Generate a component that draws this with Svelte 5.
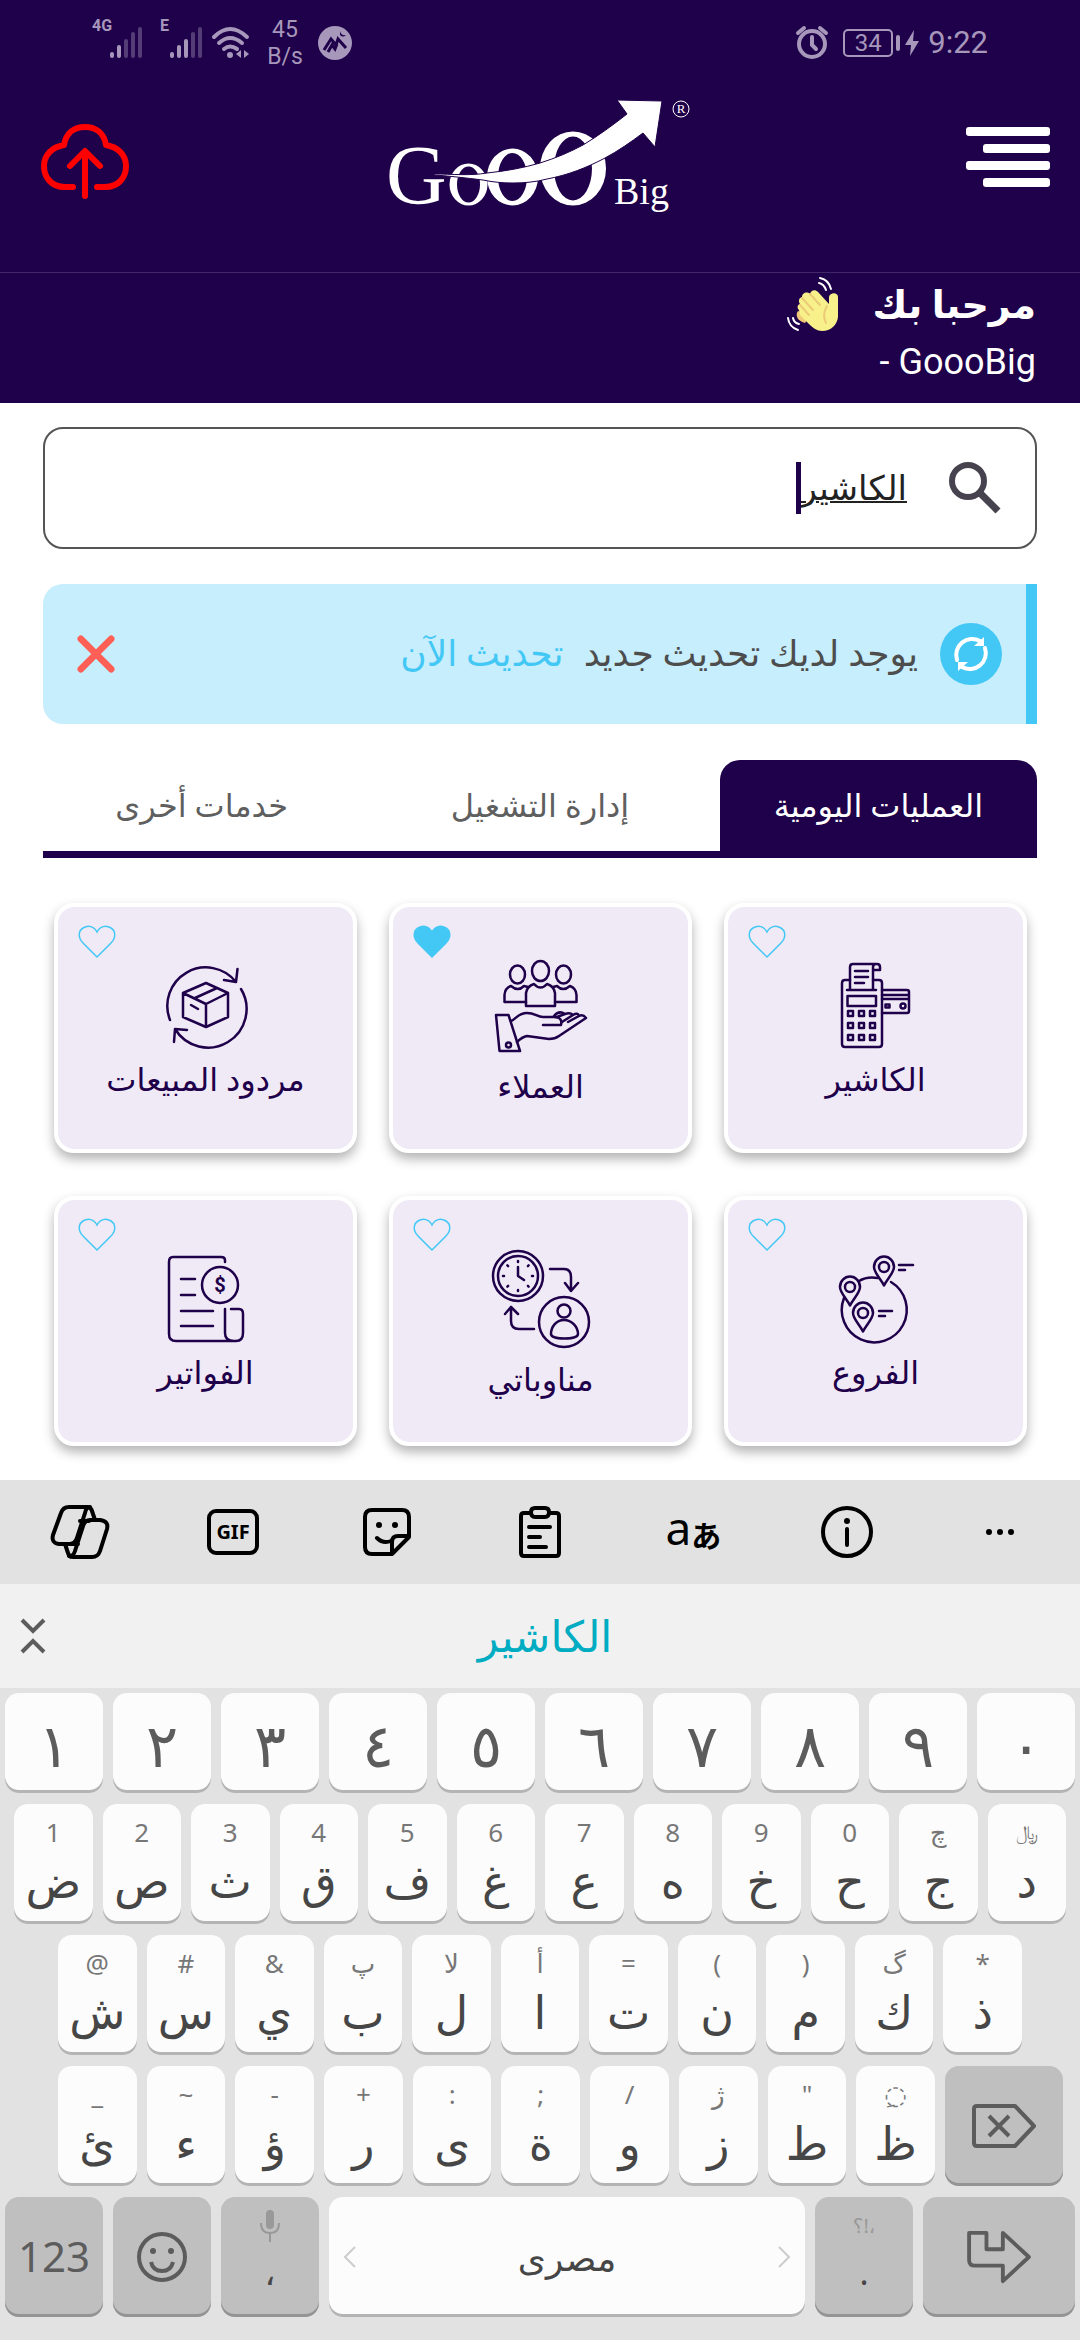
<script>
  let query = $state('الكاشير');
  let activeTab = $state(0);

  const tabs = ['العمليات اليومية', 'إدارة التشغيل', 'خدمات أخرى'];

  const services = [
    { icon: 'cashier', label: 'الكاشير' },
    { icon: 'customers', label: 'العملاء', tall: true, liked: true },
    { icon: 'returns', label: 'مردود المبيعات' },
    { icon: 'branches', label: 'الفروع' },
    { icon: 'shifts', label: 'مناوباتي', tall: true },
    { icon: 'invoices', label: 'الفواتير' }
  ];

  const viewBoxes = {
    cashier: '-14 -6 98 91',
    customers: '-3 -3 98 98',
    returns: '-9 -8 98 91',
    branches: '-12 -6 98 91',
    shifts: '0 0 98 98',
    invoices: '-11 -6 98 91'
  };

  const digits = ['١', '٢', '٣', '٤', '٥', '٦', '٧', '٨', '٩', '٠'];
  const rowA = [
    ['1', 'ض'], ['2', 'ص'], ['3', 'ث'], ['4', 'ق'], ['5', 'ف'], ['6', 'غ'],
    ['7', 'ع'], ['8', 'ه'], ['9', 'خ'], ['0', 'ح'], ['چ', 'ج'], ['﷼', 'د']
  ];
  const rowB = [
    ['@', 'ش'], ['#', 'س'], ['&', 'ي'], ['پ', 'ب'], ['لا', 'ل'], ['أ', 'ا'],
    ['=', 'ت'], ['(', 'ن'], [')', 'م'], ['گ', 'ك'], ['*', 'ذ']
  ];
  const rowC = [
    ['_', 'ئ'], ['~', 'ء'], ['-', 'ؤ'], ['+', 'ر'], [':', 'ى'], [';', 'ة'],
    ['/', 'و'], ['ژ', 'ز'], ['"', 'ط'], ['◌ِ', 'ظ']
  ];
  const keypad = [9.5, 20.5, 31.5];
  const keypadRows = [50.5, 62.5, 74.5];
  const ticks = [0, 45, 90, 135, 180, 225, 270, 315];
</script>

{#snippet signal(strong)}
  <svg class="signal" width="34" height="32" viewBox="0 0 34 32" aria-hidden="true">
    {#each [6, 13, 19, 26, 31] as h, i}
      <rect x={i * 7} y={31 - h} width="4" height={h} rx="2" opacity={i < strong ? 1 : 0.4} />
    {/each}
  </svg>
{/snippet}

{#snippet pin(x, y)}
  <path d="M{x} {y + 18.5}C{x - 3} {y + 12} {x - 10} {y + 6} {x - 10} {y}a10 10.500 0 0 1 20 0C{x + 10} {y + 6} {x + 3} {y + 12} {x} {y + 18.5}z" />
  <circle cx={x} cy={y} r="5" />
{/snippet}

{#snippet letterKey(hint, letter)}
  <button class="key letter" type="button">
    <span class="hint" class:small={hint === '﷼'}>{hint}</span>
    <span class="main">{letter}</span>
  </button>
{/snippet}

<div class="screen">
  <header class="top">
    <div class="status">
      <div class="group">
        <span class="net">4G</span>
        {@render signal(2)}
        <span class="net edge">E</span>
        {@render signal(3)}
        <svg class="wifi" width="40" height="32" viewBox="0 0 40 32" aria-hidden="true">
          <g fill="none" stroke="currentColor" stroke-width="4" stroke-linecap="round">
            <path d="M2 10Q18-6 35 10" /><path d="M7 16Q18 6 30 16" /><path d="M12 22Q18 17 25 22" />
          </g>
          <circle cx="18" cy="28" r="3" />
          <path d="M29 23v8l-5-4zM32 23v8l5-4z" />
        </svg>
        <span class="speed">45<br />B/s</span>
        <svg width="34" height="34" viewBox="0 0 34 34" aria-hidden="true">
          <circle cx="17" cy="17" r="17" />
          <g class="cut">
            <path d="M6 24L13 13L18 19L20 13L28 22M10 26L14 19L17 23L19 18" />
            <path d="M22 5Q23 10 28 9Q25 12 22 9z" />
          </g>
        </svg>
      </div>
      <div class="group">
        <svg width="34" height="34" viewBox="0 0 34 34" aria-hidden="true">
          <g fill="none" stroke="currentColor" stroke-width="4" stroke-linecap="round">
            <circle cx="17" cy="18" r="13" /><path d="M17 11v8l4 4M3 7l6-5M31 7l-6-5" />
          </g>
        </svg>
        <span class="battery">34</span>
        <svg width="24" height="30" viewBox="0 0 24 30" aria-hidden="true">
          <rect x="0" y="7" width="4" height="16" rx="2" />
          <path d="M18 2L9 17h6l-1 11 9-15h-6z" />
        </svg>
        <span class="clock">9:22</span>
      </div>
    </div>

    <div class="bar" dir="rtl">
      <button class="plain menu" type="button" aria-label="القائمة">
        <svg width="84" height="60" viewBox="0 0 84 60">
          <g fill="#fff">
            <rect x="0" y="0" width="84" height="9" rx="3" /><rect x="17" y="17" width="67" height="9" rx="3" />
            <rect x="0" y="34" width="84" height="9" rx="3" /><rect x="17" y="51" width="67" height="9" rx="3" />
          </g>
        </svg>
      </button>
      <svg class="logo" width="304" height="118" viewBox="388 98 304 118" role="img" aria-label="GoooBig">
        <g fill="#fff">
          <text class="serif" x="386" y="204" font-size="84">G</text>
          <path fill-rule="evenodd" d="M449.500 184.500a19 21 0 1 0 38 0a19 21 0 1 0-38 0zM457 184.500a11.500 18 0 1 1 23 0a11.500 18 0 1 1-23 0z" />
          <path fill-rule="evenodd" d="M487 177a25.500 28.500 0 1 0 51 0a25.500 28.500 0 1 0-51 0zM498 177a14.500 24 0 1 1 29 0a14.500 24 0 1 1-29 0z" />
          <path fill-rule="evenodd" d="M540 168.500a33 37 0 1 0 66 0a33 37 0 1 0-66 0zM554 168.500a19 32 0 1 1 38 0a19 32 0 1 1-38 0z" />
          <path class="swoosh" d="M434 174C452 174 470 176 487 173C506 171 523 168 540 163C556 158 570 152 583 145C598 136 613 125 627 114L617 100L662 101L655 147L643 133C631 142 618 151 605 158C586 168 568 175 547 179C536 182 524 183 513 183C502 183 492 182 483 180C466 178 450 176 434 175z" />
          <text class="serif" x="614" y="204" font-size="38">Big</text>
          <text class="serif" x="681" y="113" font-size="13" text-anchor="middle">R</text>
        </g>
        <circle cx="681" cy="109" r="8" fill="none" stroke="#fff" stroke-width="1" />
      </svg>
      <button class="plain upload" type="button" aria-label="رفع">
        <svg width="88" height="76" viewBox="0 0 88 76">
          <g fill="none" stroke="#f00" stroke-width="6" stroke-linecap="round" stroke-linejoin="round">
            <path d="M32 63H24C10 63 3 53 3 42C3 31 11 23 23 21C25 9 33 3 44 3C55 3 63 9 65 21C77 23 85 31 85 42C85 53 78 63 64 63H56" />
            <path d="M44 72V28M29 42L44 27L59 42" />
          </g>
        </svg>
      </button>
    </div>
  </header>

  <section class="greeting" dir="rtl">
    <h1>
      مرحبا بك
      <svg width="54" height="56" viewBox="0 0 54 56" aria-hidden="true">
        <path fill="#f0c878" d="M11 34C8 38 10 44 18 46L24 38z" />
        <path fill="#f8f08a" d="M13 38L12 33C10 31 10 28 13 27C11 24 12 21 15 20C15 16 20 14 23 17C24 13 28 12 31 15L42 27V20C43 15 51 15 51 20V40C50 48 44 54 35 54C30 54 26 51 22 47z" />
        <path fill="none" stroke="#eccb78" stroke-width="2" stroke-linecap="round" d="M23 17l10 11M15 21l11 12M13 28l9 10M39 46C36 40 37 34 40 29" />
        <path fill="none" stroke="#fff" stroke-width="2" stroke-linecap="round" d="M32 6q5 1 7 7M33 1q9 2 11 11M6 41q1 5 6 6M1 41q1 9 10 12" />
      </svg>
    </h1>
    <p>GoooBig -</p>
  </section>

  <main dir="rtl">
    <label class="search">
      <svg width="52" height="52" viewBox="0 0 52 52" aria-hidden="true">
        <circle cx="19" cy="19" r="16" fill="none" stroke="#46434e" stroke-width="6" />
        <path d="M31 31L49 49" fill="none" stroke="#46434e" stroke-width="7" />
      </svg>
      <input type="text" bind:value={query} aria-label="بحث" />
      <span class="caret"></span>
    </label>

    <div class="notice">
      <svg width="62" height="62" viewBox="0 0 62 62" aria-hidden="true">
        <circle cx="31" cy="31" r="31" fill="#43c8f5" />
        <g fill="none" stroke="#fff" stroke-width="4" stroke-linecap="round">
          <path d="M17 37A16 16 0 0 1 40 18M45 25A16 16 0 0 1 22 44" />
        </g>
        <path fill="#fff" d="M44 14v9h-10zM18 48v-9h10z" />
      </svg>
      <span>يوجد لديك تحديث جديد</span>
      <a href="#update">تحديث الآن</a>
      <button class="plain close" type="button" aria-label="إغلاق">
        <svg width="38" height="38" viewBox="0 0 40 40">
          <path d="M4 4L36 36M36 4L4 36" fill="none" stroke="#ff5f55" stroke-width="7" stroke-linecap="round" />
        </svg>
      </button>
    </div>

    <nav class="tabs">
      {#each tabs as tab, i}
        <button type="button" class:active={activeTab === i} onclick={() => (activeTab = i)}>{tab}</button>
      {/each}
    </nav>

    <div class="grid">
      {#each services as s}
        <article class="card">
          <button class="plain heart" type="button" aria-label="المفضلة" aria-pressed={!!s.liked}>
            <svg width="38" height="34" viewBox="0 0 38 34">
              <path d="M19 32L5 18C0 13 0 6 5 3C10 0 16 1 19 7C22 1 28 0 33 3C38 6 38 13 33 18z" fill={s.liked ? '#43c8f5' : 'none'} stroke="#43c8f5" stroke-width="1.500" />
            </svg>
          </button>
          <svg class="art" width="98" height={s.tall ? 98 : 91} viewBox={viewBoxes[s.icon]} aria-hidden="true">
            {#if s.icon === 'cashier'}
              <path d="M9 17H4Q1 17 1 20V81Q1 84 4 84H38Q41 84 41 81V20Q41 17 38 17H32" />
              <path d="M9 27V4Q9 1 12 1H36Q39 1 39 4V7H32V27M32 7V4Q32 1 35 1M6 27H35" />
              <path d="M14 8H27M14 14H27M14 20H23" />
              <rect x="6.500" y="33" width="28.500" height="10" />
              {#each keypadRows as y}{#each keypad as x}<rect x={x - 2.5} y={y - 2.5} width="5" height="5" />{/each}{/each}
              <path d="M41 27H66Q68 27 68 29V48Q68 50 66 50H41M41 32H68M41 36H68" />
              <rect x="44.500" y="41.500" width="4" height="3" /><circle cx="62" cy="43" r="2.500" />
            {:else if s.icon === 'customers'}
              <ellipse cx="45.500" cy="11" rx="8.500" ry="10" />
              <ellipse cx="22.500" cy="14.500" rx="7.500" ry="9" /><ellipse cx="68.500" cy="14.500" rx="7.500" ry="9" />
              <path d="M31 46V33Q32 26 39 24Q45.500 31 52 24Q59 26 60 33V46z" />
              <path d="M31 42H9.500V35Q10 28 16 26Q23 32 29 26L33 27M60 42H81.500V35Q81 28 75 26Q68 32 62 26L58 27" />
              <path d="M1 55H13.500L25 91H4.500z" /><circle cx="13.500" cy="85" r="2.500" />
              <path d="M16 61C21 59 23 53 32 53C40 53 42 57 48 57H59C66 57 67 61 66 65L48 65" />
              <path d="M59 56Q64 50 70 54Q75 52 78 55Q83 52 84 56Q88 54 91 58L64 76Q60 79 54 79L32 76Q27 77 22 82M67 62L78 55M73 62L84 56M62 57L70 54" />
            {:else if s.icon === 'returns'}
              <path d="M4 55A38.500 38.500 0 0 1 70 17M71.500 4L70 17L58 15" />
              <path d="M75 24A38.500 38.500 0 0 1 9 64M8 77L9 64L21 65" />
              <path d="M40 18L17 28V52L40 62L62 52V28zM17 28L40 39L62 28M40 39V62M29 33L51 23M25 40L32 44" />
            {:else if s.icon === 'branches'}
              <path d="M52 26A32.500 32.500 0 1 1 5 42M20 25Q28 20 39 22" />
              {@render pin(45, 11)}
              {@render pin(11, 31)}
              {@render pin(24, 57)}
              <path d="M60 9H74M60 14H66M40 55H53M40 60H46" />
            {:else if s.icon === 'shifts'}
              <circle cx="26" cy="26" r="25" /><circle cx="26" cy="26" r="20" />
              {#each ticks as t}<path d="M26 11V12" transform="rotate({t} 26 26)" />{/each}
              <path d="M26 17V26L32 30" />
              <path d="M58 19H72Q79 19 79 27V41M73 33L79 41L86 33" />
              <path d="M42 79H27Q19 79 19 71V57M13 64L19 57L26 64" />
              <circle cx="72" cy="72" r="25" /><circle cx="72" cy="61" r="6.500" />
              <path d="M72 70C64 70 59 77 59 84C59 90 86 90 86 84C86 77 80 70 72 70z" />
            {:else}
              <path d="M57 6V4Q57 1 53 1H5Q1 1 1 6V78Q1 85 8 85H68Q75 85 75 77V58Q75 53 71 53H63M57 53V77Q57 85 66 85" />
              <circle cx="52" cy="29" r="18" /><path d="M13 23H27M13 39H27M13 55H45M13 70H45" />
              <text x="52" y="36" text-anchor="middle">$</text>
            {/if}
          </svg>
          <h2>{s.label}</h2>
        </article>
      {/each}
    </div>
  </main>

  <footer class="keyboard">
    <div class="tools">
      <button class="plain" type="button" aria-label="Copilot">
        <svg width="58" height="54" viewBox="0 0 58 54">
          <path d="M18 2H36Q40 2 41 6L44 15H49Q58 16 56 24L49 46Q47 52 41 52H22Q18 52 17 48L14 39H8Q0 38 2 30L10 8Q12 2 18 2z" />
          <path d="M14 39H19Q24 39 26 33L34 8Q35 2 39 2M44 15H39Q34 15 32 21L24 46Q22 52 18 51M29 16H38M19 39H27" />
        </svg>
      </button>
      <button class="plain" type="button" aria-label="GIF">
        <svg width="52" height="46" viewBox="0 0 52 46">
          <rect x="2" y="2" width="48" height="42" rx="7" />
          <text x="26" y="30" text-anchor="middle" class="gif">GIF</text>
        </svg>
      </button>
      <button class="plain" type="button" aria-label="Stickers">
        <svg width="48" height="48" viewBox="0 0 48 48">
          <path d="M9 2H39Q46 2 46 9V29L29 46H9Q2 46 2 39V9Q2 2 9 2zM46 28H35Q29 28 29 34V46M14 30Q20 36 28 33" />
          <circle class="dot" cx="16" cy="17" r="3" /><circle class="dot" cx="32" cy="17" r="3" />
        </svg>
      </button>
      <button class="plain" type="button" aria-label="Clipboard">
        <svg width="42" height="52" viewBox="0 0 42 52">
          <path d="M12 7H5Q2 7 2 10V47Q2 50 5 50H37Q40 50 40 47V10Q40 7 37 7H30M16 2H26Q30 2 30 6Q30 11 26 11H16Q12 11 12 6Q12 2 16 2zM10 21H31M10 31H21M10 41H27" />
        </svg>
      </button>
      <button class="plain translate" type="button" aria-label="Translate"><span>a</span><b>あ</b></button>
      <button class="plain" type="button" aria-label="Info">
        <svg width="52" height="52" viewBox="0 0 52 52">
          <circle cx="26" cy="26" r="24" /><path d="M26 23V39" /><circle class="dot" cx="26" cy="15" r="3" />
        </svg>
      </button>
      <button class="plain" type="button" aria-label="More">
        <svg width="30" height="8" viewBox="0 0 30 8">
          <circle class="dot" cx="4" cy="4" r="3" /><circle class="dot" cx="15" cy="4" r="3" /><circle class="dot" cx="26" cy="4" r="3" />
        </svg>
      </button>
    </div>

    <div class="suggest">
      <button class="plain" type="button" aria-label="Collapse">
        <svg width="26" height="36" viewBox="0 0 26 36">
          <path d="M2 2L13 13L24 2M2 34L13 23L24 34" fill="none" stroke="#5c5c5c" stroke-width="4" />
        </svg>
      </button>
      <button class="plain word" type="button">الكاشير</button>
    </div>

    <div class="keys">
      <div class="row wide">
        {#each digits as d}<button class="key digit" type="button">{d}</button>{/each}
      </div>
      <div class="row mid">
        {#each rowA as [hint, letter]}{@render letterKey(hint, letter)}{/each}
      </div>
      <div class="row inset">
        {#each rowB as [hint, letter]}{@render letterKey(hint, letter)}{/each}
      </div>
      <div class="row shift">
        {#each rowC as [hint, letter]}{@render letterKey(hint, letter)}{/each}
        <button class="key dark" type="button" aria-label="Backspace">
          <svg width="64" height="44" viewBox="0 0 64 44">
            <path d="M5 2H43L62 22L43 42H5Q2 42 2 39V5Q2 2 5 2zM17 12L37 32M37 12L17 32" />
          </svg>
        </button>
      </div>
      <div class="row bottom">
        <button class="key dark num" type="button">123</button>
        <button class="key dark" type="button" aria-label="Emoji">
          <svg width="50" height="50" viewBox="0 0 50 50">
            <circle cx="25" cy="25" r="23" /><path d="M14 30Q16 39 25 39Q34 39 36 30" />
            <circle class="eye" cx="16" cy="19" r="3" /><circle class="eye" cx="34" cy="19" r="3" />
          </svg>
        </button>
        <button class="key dark stack" type="button">
          <svg class="mic" width="22" height="32" viewBox="0 0 22 32" aria-hidden="true">
            <rect x="7" y="0" width="8" height="19" rx="4" />
            <path d="M2 13Q2 23 11 23Q20 23 20 13M11 23V32" />
          </svg>
          <span class="punct">،</span>
        </button>
        <button class="key space" type="button">
          <svg width="12" height="22" viewBox="0 0 12 22" aria-hidden="true"><path d="M11 1L1 11L11 21" /></svg>
          <span>مصرى</span>
          <svg width="12" height="22" viewBox="0 0 12 22" aria-hidden="true"><path d="M1 1L11 11L1 21" /></svg>
        </button>
        <button class="key dark stack" type="button">
          <span class="marks" dir="rtl">،!؟</span>
          <span class="punct">.</span>
        </button>
        <button class="key dark" type="button" aria-label="Enter">
          <svg width="66" height="54" viewBox="0 0 68 56">
            <path d="M3 3H21V20H38V3L65 28L38 53V37H9Q3 37 3 31z" />
          </svg>
        </button>
      </div>
    </div>
  </footer>
</div>

<style>
  :global(body) { margin: 0; background: #fff; }
  .screen {
    min-height: 100vh;
    display: flex;
    flex-direction: column;
    font-family: Roboto, "DejaVu Sans", sans-serif;
    color: #1f004a;
  }
  button { font: inherit; color: inherit; border: 0; margin: 0; padding: 0; cursor: pointer; }
  .plain { background: none; display: flex; align-items: center; justify-content: center; }
  svg { display: block; flex: none; overflow: visible; }

  .top { background: #1f004a; border-bottom: 1px solid #42286a; }
  .status {
    height: 86px;
    padding: 0 92px;
    display: flex;
    align-items: center;
    justify-content: space-between;
    color: #a697bb;
    fill: #a697bb;
  }
  .group { display: flex; align-items: center; }
  .net { font: bold 16px/20px Roboto, sans-serif; align-self: flex-start; width: 18px; }
  .edge { margin-left: 16px; width: 10px; }
  .wifi { margin-left: 8px; }
  .speed { width: 46px; margin: 0 10px; font: 23px/27px Roboto, sans-serif; text-align: center; }
  .cut path { fill: none; stroke: #1f004a; stroke-width: 3; }
  .cut path:last-child { fill: #1f004a; stroke: none; }
  .battery {
    width: 46px; height: 24px; margin: 0 3px 0 14px;
    border: 2px solid #a697bb; border-radius: 5px;
    font: 24px/24px Roboto, sans-serif; text-align: center;
  }
  .clock { margin-left: 8px; font: 31px/36px Roboto, sans-serif; }

  .bar { display: grid; grid-template-columns: 1fr auto 1fr; align-items: start; padding: 12px 30px 56px; }
  .menu { margin-top: 29px; justify-self: start; }
  .upload { margin: 26px 0 0 11px; justify-self: end; }
  .logo { direction: ltr; }
  .serif { font-family: "Liberation Serif", serif; }
  .swoosh { stroke: #1f004a; stroke-width: 1; }

  .greeting { background: #1f004a; color: #fff; padding: 4px 44px 16px; }
  h1 { margin: 0; display: flex; align-items: center; gap: 32px; font-size: 38px; line-height: 56px; }
  .greeting p { margin: 4px 0 0; font-size: 36px; line-height: 50px; }

  main { padding: 24px 43px 23px; }
  .search {
    height: 118px; border: 2px solid #555; border-radius: 20px;
    padding: 0 34px; display: flex; align-items: center;
  }
  .search input {
    field-sizing: content; border: 0; outline: 0; background: none; margin-right: 42px; padding: 0;
    font: 34px/50px Roboto, "DejaVu Sans", sans-serif; color: #222;
    text-decoration: underline; text-decoration-thickness: 2px;
  }
  .caret { width: 5px; height: 52px; background: #1f004a; }

  .notice {
    height: 140px; margin-top: 35px; padding: 0 24px 0 34px; display: flex; align-items: center;
    background: #c6eefd; border-right: 11px solid #43c8f5; border-radius: 20px 0 0 20px;
    color: #4d4d4d; font-size: 36px;
  }
  .notice span { margin: 0 22px 0 20px; }
  .notice a { color: #43c8f5; text-decoration: none; }
  .close { margin-right: auto; }

  .tabs {
    margin-top: 36px; display: grid; grid-template-columns: repeat(3, 1fr); column-gap: 21px;
    border-bottom: 7px solid #1f004a;
  }
  .tabs button { height: 91px; background: none; border-radius: 20px 20px 0 0; font-size: 32px; color: #5f5f5f; }
  .tabs .active { background: #1f004a; color: #fff; }

  .grid { display: grid; grid-template-columns: repeat(3, 1fr); gap: 43px 32px; padding: 45px 10px 11px 11px; }
  .card {
    position: relative; height: 242px; box-sizing: content-box;
    border: 4px solid #fff; border-radius: 20px; background: #f0eaf6 padding-box;
    box-shadow: 0 6px 12px rgba(0, 0, 0, .3);
    display: flex; flex-direction: column; align-items: center;
  }
  .heart { position: absolute; left: 20px; top: 18px; }
  .art { margin-top: 50px; fill: none; stroke: #1f004a; stroke-width: 2.500; stroke-linecap: round; stroke-linejoin: round; }
  .art text { font: bold 20px Roboto, sans-serif; fill: #1f004a; stroke: none; }
  h2 { margin: 9px 0 0; font-size: 32px; line-height: 46px; font-weight: 400; }

  .keyboard {
    margin-top: auto; background: #e2e2e2; color: #464646;
    font-family: "Noto Sans", "DejaVu Sans", sans-serif;
  }
  .tools { height: 104px; padding: 0 3px; display: grid; grid-template-columns: repeat(7, 1fr); align-items: center; color: #000; }
  .tools svg { fill: none; stroke: #000; stroke-width: 4; stroke-linecap: round; stroke-linejoin: round; }
  .tools .dot { fill: #000; stroke: none; }
  .tools .gif { font: bold 20px "Noto Sans", sans-serif; fill: #000; stroke: none; }
  .translate span { font-size: 46px; line-height: 60px; padding-bottom: 10px; }
  .translate b { font: bold 30px/60px "Noto Sans CJK JP", sans-serif; padding-top: 4px; }
  .suggest {
    height: 104px; padding: 0 20px; background: #f1f1f1;
    display: grid; grid-template-columns: 26px 1fr 16px; align-items: center;
  }
  .word { color: #00acc1; font-size: 43px; line-height: 60px; }

  .keys { padding: 5px 0 23px; display: grid; gap: 11px; }
  .row { display: grid; grid-auto-flow: column; grid-auto-columns: 1fr; column-gap: 10px; }
  .wide { padding: 0 5px; }
  .mid { padding: 0 14px; }
  .inset { padding: 0 58px; }
  .shift { padding: 0 17px 0 58px; grid-template-columns: repeat(10, 1fr) 118px; }
  .bottom { padding: 0 5px; grid-template-columns: 98px 98px 98px 1fr 98px 152px; }
  .key {
    height: 120px; min-width: 0; border-radius: 14px; background: #fcfcfc;
    box-shadow: inset 0 -3px #b4b4b4;
    display: flex; flex-direction: column; align-items: center; justify-content: center;
  }
  .digit { height: 100px; font-size: 60px; line-height: 60px; color: #5c5c5c; padding-top: 2px; }
  .letter { justify-content: flex-start; padding-top: 10px; }
  .hint { font-size: 26px; line-height: 36px; color: #777; }
  .hint.small { font-size: 20px; }
  .main { font-size: 46px; line-height: 60px; }
  .dark { background: #bfbfbf; box-shadow: inset 0 -3px #949494; color: #5c5c5c; }
  .dark svg { fill: none; stroke: #5c5c5c; stroke-width: 4; stroke-linejoin: round; }
  .dark .eye { fill: #5c5c5c; stroke: none; }
  .num { font-size: 42px; padding-bottom: 4px; }
  .stack { justify-content: flex-start; padding-top: 13px; }
  .dark .mic { stroke: #999; stroke-width: 2; }
  .mic rect { fill: #999; stroke: none; }
  .marks { font-size: 20px; line-height: 32px; color: #999; }
  .punct { font-size: 34px; line-height: 60px; color: #464646; }
  .space { flex-direction: row; justify-content: space-between; padding: 0 15px; font-size: 36px; }
  .space svg { fill: none; stroke: #ccc; stroke-width: 2; }
</style>
